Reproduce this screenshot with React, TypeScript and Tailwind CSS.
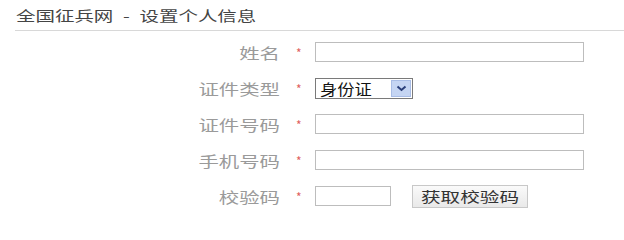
import React from "react";

const font = { fontFamily: '"Noto Sans CJK SC", "Noto Sans", sans-serif' };

function Row({ label, children }: { label: string; children: React.ReactNode }) {
  return (
    <div className="flex items-center h-[36px]">
      <div className="w-[280px] text-right text-[15px] text-[#9a9a9a] leading-none">
        <span className="inline-block origin-right scale-x-[1.36]">{label}</span>
      </div>
      <div className="w-[35px] pl-[16px] text-[12px] text-[#e06060] leading-none pt-[2px]">*</div>
      {children}
    </div>
  );
}

export default function App() {
  return (
    <div className="w-[624px] h-[220px] bg-white overflow-hidden" style={font}>
      <div className="ml-[15px] h-[31px] border-b border-[#d8d8d8] flex items-center">
        <span className="ml-[1px] inline-block origin-left scale-x-[1.39] text-[14px] text-[#444] whitespace-nowrap">
          全国征兵网<span className="mx-[7px]">-</span>设置个人信息
        </span>
      </div>
      <div className="pt-[3px]">
        <Row label="姓名">
          <div className="w-[269px] h-[20px] border border-[#bdbdbd] bg-white" />
        </Row>
        <Row label="证件类型">
          <div className="w-[98px] h-[21px] border border-[#7a7a7a] bg-white flex items-center">
            <span className="flex-1 pl-[4px] text-[15px] text-[#111] leading-none">
              <span className="inline-block origin-left scale-x-[1.15]">身份证</span>
            </span>
            <div className="w-[20px] h-[17px] mr-[1px] bg-[#c5d5f3] border border-[#a9bde6] flex items-center justify-center">
              <svg width="11" height="7" viewBox="0 0 11 7">
                <path d="M1.5 1.5 L5.5 5 L9.5 1.5" fill="none" stroke="#2a3f7a" strokeWidth="2" />
              </svg>
            </div>
          </div>
        </Row>
        <Row label="证件号码">
          <div className="w-[269px] h-[20px] border border-[#bdbdbd] bg-white" />
        </Row>
        <Row label="手机号码">
          <div className="w-[269px] h-[20px] border border-[#bdbdbd] bg-white" />
        </Row>
        <Row label="校验码">
          <div className="w-[76px] h-[20px] border border-[#bdbdbd] bg-white" />
          <button className="ml-[21px] w-[116px] h-[23px] border border-[#c8c8c8] bg-gradient-to-b from-[#fafafa] to-[#e9e9e9] text-[14px] text-[#333] leading-none flex items-center justify-center">
            <span className="inline-block scale-x-[1.4]">获取校验码</span>
          </button>
        </Row>
      </div>
    </div>
  );
}
